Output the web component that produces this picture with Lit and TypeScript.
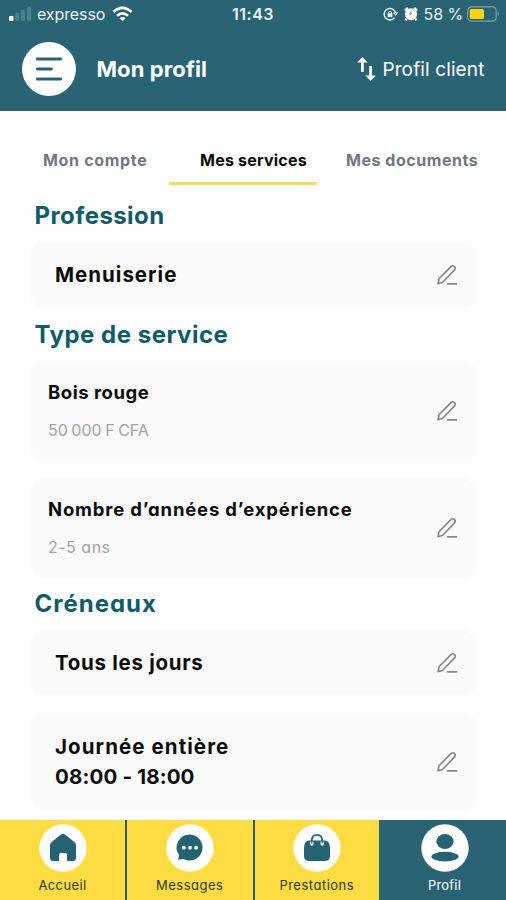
import { LitElement, html, css, svg } from "lit";
import { customElement } from "lit/decorators.js";
import { classMap } from "lit/directives/class-map.js";

interface Card {
  size: string;
  lines: { text: string; cls: string }[];
}

const pencil = svg`<svg class="pencil" width="22" height="22" viewBox="0 0 22 22" fill="none" stroke="#858585" stroke-width="1.6" stroke-linecap="round" stroke-linejoin="round">
  <path d="M3 14.8 L15.2 2.4 Q16.9 1 18.5 2.6 Q20 4.2 18.6 5.9 L6.4 18.5 L2 19.6 Z"/>
  <path d="M11.6 19.8 H20.6" stroke-width="1.8"/>
</svg>`;

@customElement("edit-card")
export class EditCard extends LitElement {
  static properties = { card: { attribute: false } };
  declare card: Card;

  static styles = css`
    :host { display: block; }
    .card {
      box-sizing: border-box;
      display: flex;
      align-items: center;
      justify-content: space-between;
      padding: 0 17px 0 23px;
      border-radius: 11px;
      background: #fafafa;
      box-shadow: 0 0 3px rgba(0, 0, 0, 0.06);
      color: #0d0d0d;
      white-space: nowrap;
    }
    .single { height: 62px; }
    .double { height: 96px; padding-left: 16px; }
    .slot { height: 93px; }
    .title { font-size: 20.5px; line-height: 30px; font-weight: 700; }
    .name { font-size: 18.5px; line-height: 38px; font-weight: 700; }
    .detail { font-size: 16px; line-height: 39px; font-weight: 400; color: #a3a3a3; }
    .w1 { letter-spacing: 1px; }
    .w2 { letter-spacing: 0.52px; }
    .w3 { letter-spacing: -0.05px; word-spacing: -0.8px; }
    .w4 { letter-spacing: 0.82px; }
    .w5 { letter-spacing: 0.5px; }
    .w6 { letter-spacing: 0.7px; }
    .w7 { letter-spacing: 1.08px; }
    .w8 { letter-spacing: 0.15px; }
    .pencil { display: block; flex: none; }
  `;

  render() {
    return html`<div class=${classMap({ card: true, [this.card.size]: true })}>
      <div>${this.card.lines.map((l) => html`<div class=${l.cls}>${l.text}</div>`)}</div>
      ${pencil}
    </div>`;
  }
}

const sections: { title: string; cls: string; cards: Card[] }[] = [
  {
    title: "Profession", cls: "s1",
    cards: [{ size: "single", lines: [{ text: "Menuiserie", cls: "title w1" }] }],
  },
  {
    title: "Type de service", cls: "s2",
    cards: [
      { size: "double", lines: [{ text: "Bois rouge", cls: "name w2" }, { text: "50 000 F CFA", cls: "detail w3" }] },
      { size: "double", lines: [{ text: "Nombre d’années d’expérience", cls: "name w4" }, { text: "2-5 ans", cls: "detail w5" }] },
    ],
  },
  {
    title: "Créneaux", cls: "s3",
    cards: [
      { size: "single", lines: [{ text: "Tous les jours", cls: "title w6" }] },
      { size: "slot", lines: [{ text: "Journée entière", cls: "title w7" }, { text: "08:00 - 18:00", cls: "title w8" }] },
    ],
  },
];

const home = svg`<path d="M24 9.8 Q25 9.8 26 10.6 L35.6 18.2 Q37 19.4 37 21 V34 Q37 37 34 37 H28 V31 Q28 29 26 29 H22 Q20 29 20 31 V37 H14 Q11 37 11 34 V21 Q11 19.4 12.4 18.2 L22 10.6 Q23 9.8 24 9.8 Z" fill="#266372"/>`;
const chat = svg`<path d="M24 10.5 A13 13 0 1 1 17.5 35 L12 35.8 L13.2 31.2 A13 13 0 0 1 24 10.5 Z" fill="#266372"/>
  <g fill="#fff"><rect x="16.2" y="22" width="3.4" height="3.4" rx=".8"/><rect x="22.3" y="22" width="3.4" height="3.4" rx=".8"/><rect x="28.4" y="22" width="3.4" height="3.4" rx=".8"/></g>`;
const bag = svg`<path d="M18.8 18 V16.5 Q18.8 10.8 24 10.8 Q29.2 10.8 29.2 16.5 V18" fill="none" stroke="#266372" stroke-width="1.7"/>
  <path d="M16 16.5 H32 Q34.4 16.5 35.6 18.5 Q37 21 37 24 V32 Q37 37 32 37 H16 Q11 37 11 32 V24 Q11 21 12.4 18.5 Q13.6 16.5 16 16.5 Z" fill="#266372"/>
  <path d="M18.8 18.8 V20 M29.2 18.8 V20" stroke="#fff" stroke-width="3.4" stroke-linecap="round"/>
  <path d="M18.8 15.5 V19.6 M29.2 15.5 V19.6" stroke="#266372" stroke-width="1.3"/>`;
const person = svg`<ellipse cx="24" cy="17.5" rx="8.6" ry="7.4" fill="#266372"/><ellipse cx="24" cy="32.6" rx="13.6" ry="4.8" fill="#266372"/>`;

const nav = [
  { label: "Accueil", icon: home, cls: "n1" },
  { label: "Messages", icon: chat, cls: "n2" },
  { label: "Prestations", icon: bag, cls: "n3" },
  { label: "Profil", icon: person, cls: "n4" },
];

@customElement("app-root")
export class AppRoot extends LitElement {
  static styles = css`
    :host {
      display: flex;
      flex-direction: column;
      height: 900px;
      overflow: hidden;
      background: #fff;
      font-family: Inter, "Open Sans", sans-serif;
      font-feature-settings: "cv11";
      white-space: nowrap;
    }
    svg { display: block; flex: none; }
    .top { height: 111px; flex: none; background: #2a6373; color: #fff; }
    .status {
      display: grid;
      grid-template-columns: 1fr auto 1fr;
      align-items: center;
      height: 28px;
      font-size: 16px;
      font-feature-settings: normal;
      color: #e9f4f6;
    }
    .left, .right { display: flex; align-items: center; }
    .left { padding-left: 8px; }
    .right { justify-content: flex-end; padding-right: 6px; }
    .carrier { margin: 0 7px 0 5px; letter-spacing: -0.1px; }
    .time { font-weight: 600; letter-spacing: 0.5px; }
    .pct { margin: 0 4px 0 6px; letter-spacing: -0.1px; }
    .lock { margin-right: 6px; }
    .bar { display: flex; align-items: center; height: 82px; padding: 0 21.5px; }
    .menu {
      display: grid;
      place-items: center;
      width: 54.5px;
      height: 54.5px;
      border-radius: 50%;
      background: #fff;
    }
    .heading { margin-left: 20.5px; font-size: 22px; font-weight: 700; letter-spacing: 0.1px; }
    .switch { display: flex; align-items: center; gap: 5px; margin-left: auto; font-size: 19px; letter-spacing: 0.12px; }
    .tabs {
      display: flex;
      flex: none;
      height: 77px;
      box-sizing: border-box;
      padding: 23px 0 3px 43px;
      font-size: 16px;
      font-weight: 700;
      color: #707782;
    }
    .tab { height: 48px; line-height: 53px; border-bottom: 3px solid transparent; }
    .t1 { width: 126px; letter-spacing: 0.68px; }
    .t2 { width: 117px; padding-left: 31px; color: #0a0a0a; letter-spacing: 0.22px; border-color: #f3dc62; }
    .t3 { padding-left: 29px; letter-spacing: 0.54px; }
    main { flex: 1; min-height: 0; padding: 0 31px 0 32px; overflow: hidden; }
    h2 { margin: 0 0 0 2.5px; font-size: 24px; line-height: 56px; font-weight: 700; color: #105b69; }
    .s1 { letter-spacing: 0.42px; }
    .s2 { letter-spacing: 0.5px; line-height: 57px; }
    .s3 { letter-spacing: 1px; }
    .cards { display: grid; gap: 21px; }
    nav { display: grid; grid-template-columns: 125px 125.5px 124.5px 1fr; gap: 2px; height: 80.5px; flex: none; background: #2a6373; }
    .item { display: flex; flex-direction: column; align-items: center; padding-top: 4.5px; background: #ffdd42; color: #2d3b2e; font-size: 13px; }
    .label { line-height: 16px; margin-top: 5px; }
    .n1 { letter-spacing: 0.4px; }
    .n2 { letter-spacing: 0.5px; }
    .n3 { letter-spacing: 0.5px; }
    .n4 { letter-spacing: 0.2px; padding-left: 2px; background: #2a6373; color: #fff; }
  `;

  render() {
    return html`
      <div class="top">
        <div class="status">
          <div class="left">
            <svg width="24" height="16" viewBox="0 0 24 16" fill="#4a7f8c">
              <rect x="1" y="10" width="4.5" height="5" rx="1.3" fill="#fff"/>
              <rect x="7" y="7" width="4.2" height="8" rx="1"/>
              <rect x="13" y="4" width="4.2" height="11" rx="1"/>
              <rect x="19" y="1" width="4.2" height="14" rx="1"/>
            </svg>
            <span class="carrier">expresso</span>
            <svg width="21" height="16" viewBox="0 0 21 16" fill="none" stroke="#fff" stroke-width="2.7">
              <path d="M1.4 6 Q10.5 -2.4 19.6 6"/><path d="M5 9.8 Q10.5 4.9 16 9.8"/>
              <path d="M10.5 15.2 L7.5 12.2 Q10.5 9.6 13.5 12.2 Z" fill="#fff" stroke="none"/>
            </svg>
          </div>
          <span class="time">11:43</span>
          <div class="right">
            <svg class="lock" width="15" height="14" viewBox="0 0 15 14" fill="none" stroke="#e9f4f6" stroke-width="1.4">
              <path d="M11.6 10.7 A5.8 5.8 0 1 1 12.7 6.2"/><path d="M10.6 5.6 L12.7 7.8 L14.4 5.2" stroke-width="1.2"/>
              <rect x="4.6" y="6.2" width="4.8" height="3.9" fill="#e9f4f6" stroke="none"/><path d="M5.6 6.5 V5 Q7 3.2 8.4 5 V6.5" stroke-width="1"/>
            </svg>
            <svg width="14" height="14" viewBox="0 0 14 14">
              <circle cx="7" cy="7.2" r="6" fill="#fff"/>
              <path d="M.9 3.6 L3.8 .9 M13.1 3.6 L10.2 .9 M2.7 11.7 L1.4 13.3 M11.3 11.7 L12.6 13.3" stroke="#fff" stroke-width="2.2"/>
              <path d="M7 4.4 V7.4 L5.2 6.6" fill="none" stroke="#5b8591" stroke-width="1"/>
            </svg>
            <span class="pct">58 %</span>
            <svg width="33" height="16" viewBox="0 0 33 16">
              <rect x=".7" y=".9" width="28.5" height="14.2" rx="3.8" fill="none" stroke="#80a3ad" stroke-width="1.2"/>
              <rect x="2.8" y="3" width="14.2" height="10" rx="1.6" fill="#ffd60a"/>
              <path d="M30.8 5.5 Q33 8 30.8 10.5 Z" fill="#80a3ad"/>
            </svg>
          </div>
        </div>
        <div class="bar">
          <div class="menu">
            <svg width="28" height="24" viewBox="0 0 28 24" stroke="#2a6373" stroke-width="2.8" stroke-linecap="round">
              <path d="M2.3 2 H25.7 M2.3 12 H16.5 M2.3 22 H25.7"/>
            </svg>
          </div>
          <span class="heading">Mon profil</span>
          <span class="switch">
            <svg width="20" height="26" viewBox="0 0 20 26" fill="none" stroke="#fff" stroke-width="2.8">
              <path d="M5.4 15.7 V3.5 M13.6 10 V22.5"/>
              <path d="M5.4 1 L.2 6.6 H10.6 Z M13.6 25 L8.4 19.4 H18.8 Z" fill="#fff" stroke="none"/>
            </svg>
            Profil client
          </span>
        </div>
      </div>
      <div class="tabs">
        <div class="tab t1">Mon compte</div>
        <div class="tab t2">Mes services</div>
        <div class="tab t3">Mes documents</div>
      </div>
      <main>
        ${sections.map((s) => html`
          <h2 class=${s.cls}>${s.title}</h2>
          <div class="cards">${s.cards.map((c) => html`<edit-card .card=${c}></edit-card>`)}</div>
        `)}
      </main>
      <nav>
        ${nav.map((n) => html`
          <div class="item ${n.cls}">
            <svg width="48" height="48" viewBox="0 0 48 48"><circle cx="24" cy="24" r="23.7" fill="#fff"/>${n.icon}</svg>
            <span class="label">${n.label}</span>
          </div>`)}
      </nav>
    `;
  }
}
